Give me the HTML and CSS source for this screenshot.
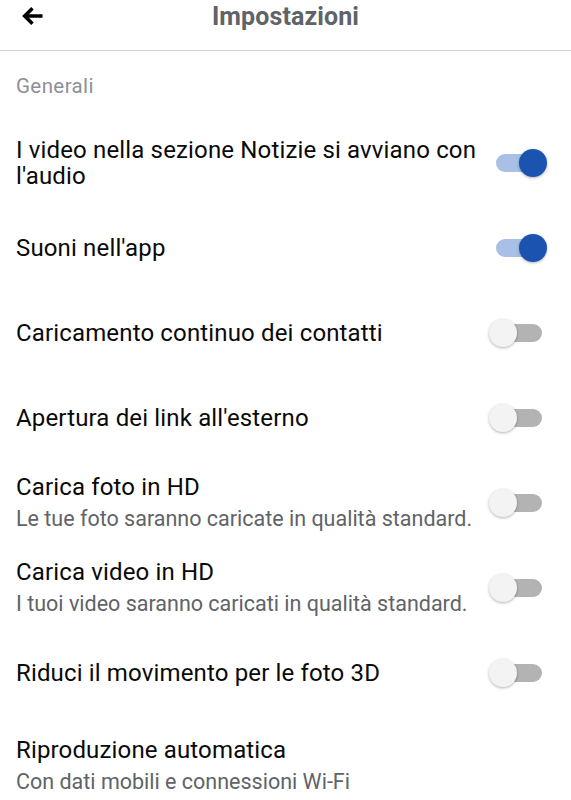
FILE: index.html
```html
<!DOCTYPE html>
<html lang="it">
<head>
<meta charset="utf-8">
<title>Impostazioni</title>
<link rel="stylesheet" href="styles.css">
</head>
<body>
<header class="topbar">
  <div class="topbar-row">
    <span class="back" aria-label="Indietro">
      <svg width="24" height="22" viewBox="0 0 24 22">
        <path d="M22.5 11H5 M12.5 3.2 L4.7 11 L12.5 18.8" fill="none" stroke="#000" stroke-width="3.6" stroke-linejoin="miter" stroke-linecap="butt"/>
      </svg>
    </span>
    <h1 class="title">Impostazioni</h1>
  </div>
</header>

<main class="list">
  <div class="section">Generali</div>

  <div class="row">
    <div class="text"><div class="label">I video nella sezione Notizie si avviano con l'audio</div></div>
    <span class="switch on"><span class="track"></span><span class="thumb"></span></span>
  </div>

  <div class="row">
    <div class="text"><div class="label">Suoni nell'app</div></div>
    <span class="switch on"><span class="track"></span><span class="thumb"></span></span>
  </div>

  <div class="row">
    <div class="text"><div class="label">Caricamento continuo dei contatti</div></div>
    <span class="switch"><span class="track"></span><span class="thumb"></span></span>
  </div>

  <div class="row">
    <div class="text"><div class="label">Apertura dei link all'esterno</div></div>
    <span class="switch"><span class="track"></span><span class="thumb"></span></span>
  </div>

  <div class="row">
    <div class="text">
      <div class="label">Carica foto in HD</div>
      <div class="sub">Le tue foto saranno caricate in qualità standard.</div>
    </div>
    <span class="switch"><span class="track"></span><span class="thumb"></span></span>
  </div>

  <div class="row">
    <div class="text">
      <div class="label">Carica video in HD</div>
      <div class="sub">I tuoi video saranno caricati in qualità standard.</div>
    </div>
    <span class="switch"><span class="track"></span><span class="thumb"></span></span>
  </div>

  <div class="row">
    <div class="text"><div class="label">Riduci il movimento per le foto 3D</div></div>
    <span class="switch"><span class="track"></span><span class="thumb"></span></span>
  </div>

  <div class="row row-top">
    <div class="text">
      <div class="label">Riproduzione automatica</div>
      <div class="sub">Con dati mobili e connessioni Wi-Fi</div>
    </div>
  </div>
</main>
</body>
</html>
```

FILE: styles.css
```css
* { box-sizing: border-box; }

html, body {
  margin: 0;
  padding: 0;
  background: #ffffff;
  font-family: Roboto, "Noto Sans", "Liberation Sans", sans-serif;
  color: #000000;
  overflow: hidden;
}

.topbar {
  height: 51px;
  border-bottom: 1px solid #cfd1d4;
}

.topbar-row {
  position: relative;
  height: 33px;
  display: flex;
  align-items: center;
  justify-content: center;
}

.back {
  position: absolute;
  left: 20px;
  top: 5px;
  width: 24px;
  height: 22px;
  display: block;
}

.back svg { display: block; }

.title {
  margin: 0;
  font-size: 25px;
  font-weight: 700;
  color: #606367;
  line-height: 33px;
  letter-spacing: 0.1px;
}

.list {
  display: flex;
  flex-direction: column;
}

.section {
  padding: 23px 16px 21px;
  font-size: 20.5px;
  line-height: 25px;
  color: #8d9095;
  letter-spacing: 0.4px;
}

.row {
  height: 85px;
  display: flex;
  align-items: center;
  gap: 6px;
  padding: 0 23px 0 16px;
}

.row-top {
  align-items: flex-start;
  padding-top: 22px;
}

.text {
  flex: 1;
  min-width: 0;
}

.label {
  font-size: 24px;
  line-height: 26px;
  color: #0a0a0a;
  letter-spacing: 0.15px;
}

.sub {
  margin-top: 5px;
  font-size: 21.5px;
  line-height: 27px;
  color: #606367;
  letter-spacing: 0;
}

.switch {
  position: relative;
  flex: none;
  width: 59px;
  height: 30px;
}

.track {
  position: absolute;
  left: 7px;
  top: 6px;
  width: 46px;
  height: 18px;
  border-radius: 9px;
  background: #b3b3b3;
}

.thumb {
  position: absolute;
  left: 0;
  top: 1px;
  width: 28px;
  height: 28px;
  border-radius: 50%;
  background: #f3f3f3;
  box-shadow: 0 1px 3px rgba(0, 0, 0, 0.3);
}

.switch.on .track { background: #a9c0e6; }

.switch.on .thumb {
  left: 30px;
  background: #1a54b0;
}
```
